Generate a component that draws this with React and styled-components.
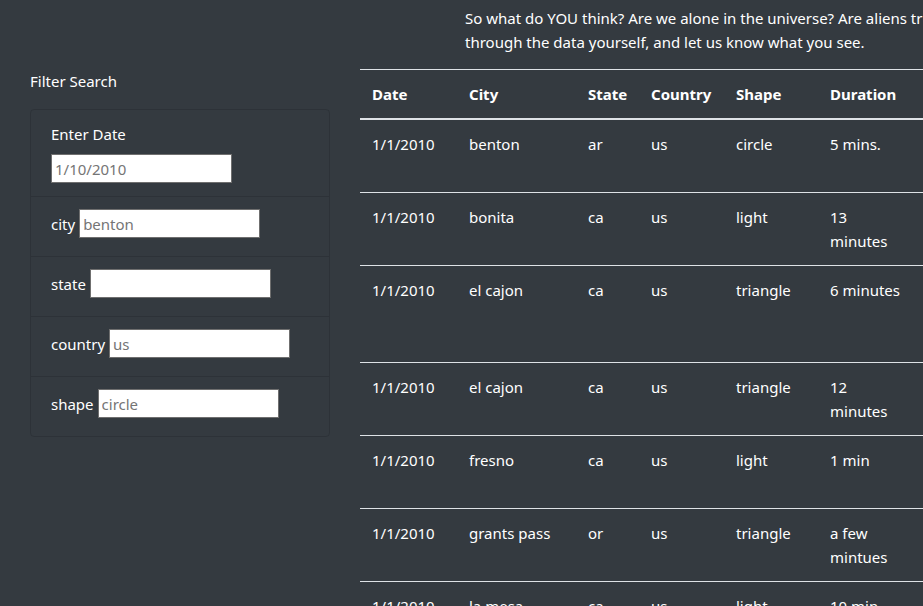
import React from 'react'
import styled, { createGlobalStyle } from 'styled-components'

const GlobalStyle = createGlobalStyle`
    html, body {
        margin: 0;
        background: #343a40;
        overflow: hidden;
    }

    body {
        font-family: "Noto Sans", "Open Sans", sans-serif;
        font-size: 15px;
        line-height: 24px;
        color: #fff;
    }
`;

const Page = styled.div`
    width: 1500px;
`;

const Intro = styled.p`
    margin: 0 0 15px;
    padding: 6px 0 0 465px;
`;

const Main = styled.div`
    display: flex;
    align-items: flex-start;
`;

const Sidebar = styled.aside`
    width: 300px;
    padding: 0 30px;
    flex-shrink: 0;
`;

const SidebarTitle = styled.div`
    margin-bottom: 16px;
`;

const Panel = styled.ul`
    list-style: none;
    margin: 0;
    padding: 0;
    border: 1px solid rgba(0, 0, 0, 0.125);
    border-radius: 4px;
`;

const Item = styled.li`
    padding: ${props => props.stacked ? '12px 20px 13px' : '12px 20px 18px'};
    display: ${props => props.stacked ? 'block' : 'flex'};
    align-items: center;
    gap: 4px;
    height: ${props => props.stacked ? 'auto' : '29px'};

    & + & {
        border-top: 1px solid rgba(0, 0, 0, 0.125);
    }
`;

const Label = styled.label`
    display: ${props => props.block ? 'block' : 'inline'};
    margin-bottom: ${props => props.block ? '8px' : '0'};
`;

const Input = styled.input`
    box-sizing: border-box;
    width: 181px;
    height: 29px;
    border: 1px solid #6f6f6f;
    padding: 1px 3px;
    background: #fff;
    font-family: inherit;
    font-size: 15px;
    color: #333;
    outline: none;

    &::placeholder {
        color: #757575;
    }
`;

const Table = styled.table`
    border-collapse: collapse;
    table-layout: fixed;
    width: 976px;
    color: #fff;
`;

const Col = styled.col`
    width: ${props => props.w}px;
`;

const Th = styled.th`
    text-align: left;
    font-weight: 700;
    padding: 12px;
    vertical-align: bottom;
    border-top: 1px solid #dee2e6;
    border-bottom: 2px solid #dee2e6;
`;

const Td = styled.td`
    padding: 12px;
    vertical-align: top;
    border-top: 1px solid #dee2e6;
`;

const columns = [
    { name: 'Date', w: 97 },
    { name: 'City', w: 119 },
    { name: 'State', w: 63 },
    { name: 'Country', w: 85 },
    { name: 'Shape', w: 94 },
    { name: 'Duration', w: 98 },
    { name: 'Comments', w: 420 },
]

const sightings = [
    ['1/1/2010', 'benton', 'ar', 'us', 'circle', '5 mins.', 'Four bright green circles high in the sky going in circles, then one bright green light.'],
    ['1/1/2010', 'bonita', 'ca', 'us', 'light', '13 minutes', 'Three red lights moving slowly over the hills before fading out.'],
    ['1/1/2010', 'el cajon', 'ca', 'us', 'triangle', '6 minutes', 'Triangle shaped craft with three white lights hovering above the freeway, then it shot off to the east without making any sound at all.'],
    ['1/1/2010', 'el cajon', 'ca', 'us', 'triangle', '12 minutes', 'Another triangle of orange lights seen over the valley, same as before.'],
    ['1/1/2010', 'fresno', 'ca', 'us', 'light', '1 min', 'A bright light in the western sky that moved fast and then vanished.'],
    ['1/1/2010', 'grants pass', 'or', 'us', 'triangle', 'a few mintues', 'Large triangle with lights at each corner passing low over the town.'],
    ['1/1/2010', 'la mesa', 'ca', 'us', 'light', '10 min', 'Red and white lights flashing in the northern sky.'],
]

const filters = [
    { id: 'city', label: 'city', placeholder: 'benton' },
    { id: 'state', label: 'state', placeholder: '' },
    { id: 'country', label: 'country', placeholder: 'us' },
    { id: 'shape', label: 'shape', placeholder: 'circle' },
]

function App() {
    return (
        <Page>
            <GlobalStyle />
            <Intro>
                So what do YOU think? Are we alone in the universe? Are aliens truly among us? Dig<br />
                through the data yourself, and let us know what you see.
            </Intro>
            <Main>
                <Sidebar>
                    <SidebarTitle>Filter Search</SidebarTitle>
                    <Panel>
                        <Item stacked>
                            <Label block htmlFor='datetime'>Enter Date</Label>
                            <Input id='datetime' type='text' placeholder='1/10/2010' />
                        </Item>
                        {filters.map(f => (
                            <Item key={f.id}>
                                <Label htmlFor={f.id}>{f.label}</Label>
                                <Input id={f.id} type='text' placeholder={f.placeholder} />
                            </Item>
                        ))}
                    </Panel>
                </Sidebar>
                <Table>
                    <colgroup>
                        {columns.map(c => <Col key={c.name} w={c.w} />)}
                    </colgroup>
                    <thead>
                        <tr>
                            {columns.map(c => <Th key={c.name}>{c.name}</Th>)}
                        </tr>
                    </thead>
                    <tbody>
                        {sightings.map((row, i) => (
                            <tr key={i}>
                                {row.map((cell, j) => <Td key={j}>{cell}</Td>)}
                            </tr>
                        ))}
                    </tbody>
                </Table>
            </Main>
        </Page>
    )
}

export default App
